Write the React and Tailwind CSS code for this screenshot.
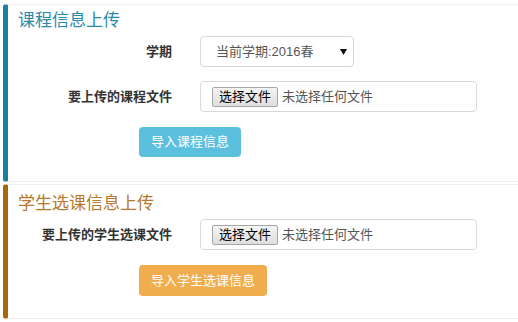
import React from 'react';

const font = { fontFamily: '"Liberation Sans", "Noto Sans CJK SC", sans-serif' };

const FileField = () => (
    <div className="flex items-center w-[277px] h-[31px] border border-[#d9d9d9] rounded-[4px] bg-white pl-[11px]">
        <div className="h-[20px] px-[6px] flex items-center border border-[#a6a6a6] rounded-[2px] bg-gradient-to-b from-[#f4f4f4] to-[#dedede] text-[13px] text-black leading-none">
            选择文件
        </div>
        <span className="ml-[4px] text-[13px] text-[#555]">未选择任何文件</span>
    </div>
);

const Label = ({ children }) => (
    <div className="w-[154px] text-right text-[13px] font-bold text-[#333]">{children}</div>
);

export default function App() {
    return (
        <div className="w-[518px] h-[322px] overflow-hidden bg-white" style={font}>
            {/* course upload */}
            <div className="mt-[4px] ml-[3px] w-[530px] border border-[#eee] border-l-[5px] border-l-[#1b809e] rounded-[3px] pl-[10px] pt-[6px] pb-[24px]">
                <h4 className="text-[17px] leading-[20px] text-[#2a8aa8]">课程信息上传</h4>
                <div className="flex items-center mt-[5px]">
                    <Label>学期</Label>
                    <div className="ml-[28px] w-[154px] h-[31px] flex items-center justify-between border border-[#d9d9d9] rounded-[4px] pl-[15px] pr-[6px]">
                        <span className="text-[13px] text-[#555]">当前学期:2016春</span>
                        <svg width="7" height="6" viewBox="0 0 7 6">
                            <path d="M0 0h7L3.5 6z" fill="#111" />
                        </svg>
                    </div>
                </div>
                <div className="flex items-center mt-[14px]">
                    <Label>要上传的课程文件</Label>
                    <div className="ml-[28px]">
                        <FileField />
                    </div>
                </div>
                <button className="mt-[15px] ml-[121px] h-[30px] px-[12px] rounded-[4px] bg-[#5bc0de] text-white text-[13px]">
                    导入课程信息
                </button>
            </div>

            {/* student selection upload */}
            <div className="mt-[2px] ml-[3px] w-[530px] border border-[#eee] border-l-[5px] border-l-[#aa6708] rounded-[3px] pl-[10px] pt-[9px] pb-[22px]">
                <h4 className="text-[17px] leading-[20px] text-[#b8782c]">学生选课信息上传</h4>
                <div className="flex items-center mt-[5px]">
                    <Label>要上传的学生选课文件</Label>
                    <div className="ml-[28px]">
                        <FileField />
                    </div>
                </div>
                <button className="mt-[15px] ml-[121px] h-[31px] px-[12px] rounded-[4px] bg-[#f0ad4e] text-white text-[13px]">
                    导入学生选课信息
                </button>
            </div>
        </div>
    );
}
